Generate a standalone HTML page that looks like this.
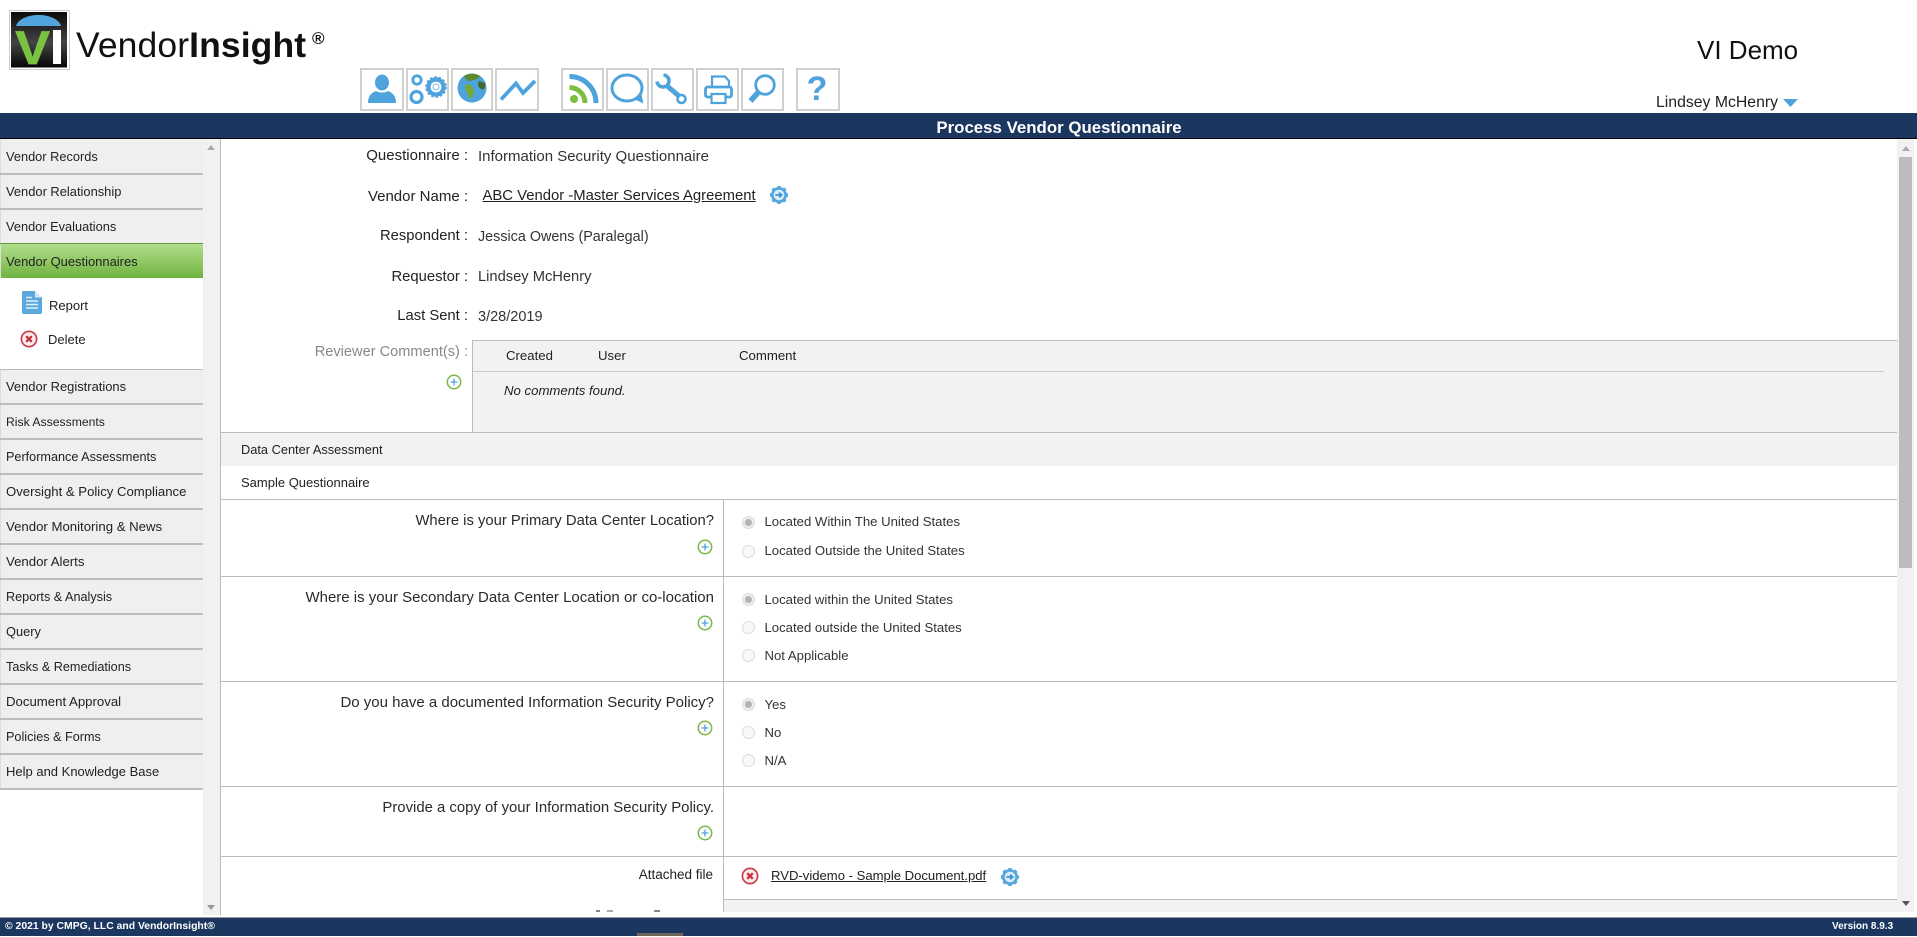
<!DOCTYPE html>
<html><head><meta charset="utf-8"><title>Process Vendor Questionnaire</title>
<style>
html,body{margin:0;padding:0;width:1917px;height:936px;overflow:hidden;background:#fff;font-family:"Liberation Sans",sans-serif;color:#222}
.a{position:absolute}
.t{position:absolute;white-space:nowrap;line-height:20px;height:20px}
.btn{position:absolute;top:68px;height:39px;border:2px solid #d0d0d0;background:#fff}
.side{position:absolute;left:0;width:203px;height:33px;background:#efefef;border-bottom:2px solid #bdbdbd;font-size:12.8px;line-height:33px;text-indent:6px;color:#222;box-shadow:inset 1px 0 0 #ddd}
.side.d{line-height:35px}
.h{position:absolute;left:221px;width:1676px;height:1px;background:#bbb}
.lab{font-size:14.8px;color:#222;text-align:right}
.val{font-size:15px;color:#333}
.q{font-size:14.8px;color:#2a2a2a;text-align:right;right:1203px}
.o{font-size:13.15px;color:#333;left:764.5px}
.r{position:absolute;left:742px;width:11px;height:11px;border:1px solid #dcdcdc;border-radius:50%;background:#f8f8f8}
.r.c{background:#ececec}
.r.c:after{content:"";position:absolute;left:2px;top:2px;width:7px;height:7px;border-radius:50%;background:#b4b4b4}
svg.i{position:absolute;overflow:visible}
</style></head><body>
<svg width="0" height="0" style="position:absolute">
<defs>
<symbol id="plus" viewBox="0 0 16 16"><circle cx="8" cy="8" r="6.7" fill="#fff" stroke="#7ab648" stroke-width="1.5"/><path d="M8 4.6V11.4M4.6 8H11.4" stroke="#4e9fd8" stroke-width="1.3"/></symbol>
<symbol id="x" viewBox="0 0 18 18"><circle cx="9" cy="9" r="7.6" fill="#fbeeee" stroke="#c9404e" stroke-width="1.7"/><path d="M6.2 6.2L11.8 11.8M11.8 6.2L6.2 11.8" stroke="#c9303f" stroke-width="2.4"/></symbol>
<symbol id="gear" viewBox="0 0 20 20"><g fill="#55a7de"><circle cx="10" cy="10" r="8"/><g stroke="#55a7de" stroke-width="3.4"><path d="M10 1V19M1 10H19M3.6 3.6L16.4 16.4M16.4 3.6L3.6 16.4"/></g></g><circle cx="10" cy="10" r="5.3" fill="#dcedf9"/><path d="M6.3 10H12M10 7.6L12.8 10L10 12.4" fill="none" stroke="#3f95d2" stroke-width="1.7"/></symbol>
</defs></svg>

<!-- logo -->
<svg class="i" style="left:9px;top:10px" width="62" height="60" viewBox="9 10 62 60">
<defs><linearGradient id="lg" x1="0" x2="0" y1="0" y2="1"><stop offset="0" stop-color="#0a0a0a"/><stop offset=".55" stop-color="#444"/><stop offset="1" stop-color="#060606"/></linearGradient></defs>
<rect x="9.5" y="10.5" width="60" height="59" fill="#fff" stroke="#ccc"/>
<rect x="11" y="12" width="56" height="55.5" fill="url(#lg)"/>
<path d="M16 26C18 19 28 15 38.500 15C49 15 59 19 61 26Z" fill="#52a5dc"/>
<text x="15.500" y="64" font-family="Liberation Sans" font-weight="700" font-size="47" fill="#7cc242" stroke="#7cc242" stroke-width=".8" transform="translate(-1.700 0) scale(1.1 1)">V</text>
<rect x="53" y="30" width="8" height="34" fill="#fff"/>
</svg>
<div class="t" style="left:76px;top:23px;height:44px;line-height:44px;font-size:35.500px;color:#111;letter-spacing:.1px">Vendor<b>Insight</b></div>
<div class="t" style="left:312px;top:29px;font-size:17px;color:#111;font-weight:700">®</div>

<!-- toolbar -->
<div class="btn" style="left:360px;width:40px"></div>
<div class="btn" style="left:406px;width:39px"></div>
<div class="btn" style="left:451px;width:38px"></div>
<div class="btn" style="left:495px;width:40px"></div>
<div class="btn" style="left:561px;width:39px"></div>
<div class="btn" style="left:606px;width:39px"></div>
<div class="btn" style="left:651px;width:39px"></div>
<div class="btn" style="left:696px;width:39px"></div>
<div class="btn" style="left:741px;width:39px"></div>
<div class="btn" style="left:796px;width:40px"></div>
<svg class="i" style="left:0;top:0" width="900" height="113" viewBox="0 0 900 113">
<!-- person -->
<ellipse cx="382" cy="82.500" rx="7" ry="8" fill="#4fa3dc"/>
<path d="M368 103C368 96 371 93 376 91C379 93 385 93 388 91C393 93 396 96 396 103Z" fill="#4fa3dc"/>
<!-- gears -->
<circle cx="417" cy="80" r="4.200" fill="none" stroke="#4fa3dc" stroke-width="2.800"/>
<circle cx="416.500" cy="97" r="5.500" fill="none" stroke="#4fa3dc" stroke-width="3.200"/>
<circle cx="436" cy="87" r="7.500" fill="none" stroke="#4fa3dc" stroke-width="4.200"/>
<circle cx="436" cy="87" r="10" fill="none" stroke="#4fa3dc" stroke-width="1.600" stroke-dasharray="2.600 1.900"/>
<circle cx="436" cy="87" r="3" fill="none" stroke="#7dbce7" stroke-width="1"/>
<!-- globe -->
<circle cx="472" cy="88" r="14.500" fill="#4fa3dc"/>
<path d="M464 76C468 73 476 73 480 76C478 80 474 79 471 81C468 82 466 80 464 76Z" fill="#5d8a2f"/>
<path d="M479 81L485 83C486 87 484 91 481 89C478 87 477 84 479 81Z" fill="#46682a"/>
<path d="M465 85C468 83 473 86 474 90C475 93 473 94 472 98L469 98C469 94 464 90 465 85Z" fill="#76a838"/>
<!-- trend -->
<path d="M501 99.500L516 83.500L523 93L535 81" fill="none" stroke="#4fa3dc" stroke-width="3.800"/>
<!-- rss -->
<circle cx="574" cy="99" r="4" fill="#7fbd3f"/>
<path d="M569.500 87.500A15.500 15.500 0 0 1 585 103" fill="none" stroke="#7fbd3f" stroke-width="5"/>
<path d="M569.500 76.500A26.500 26.500 0 0 1 596 103" fill="none" stroke="#4fa3dc" stroke-width="5"/>
<!-- chat -->
<ellipse cx="627" cy="88" rx="15" ry="13" fill="none" stroke="#4fa3dc" stroke-width="3"/>
<path d="M634 99L643.500 103.500L641 92Z" fill="#4fa3dc"/>
<!-- wrench -->
<path d="M663.500 75A6 6 0 1 1 657 81.500" fill="none" stroke="#4fa3dc" stroke-width="3.600"/>
<path d="M666 85L679 96" stroke="#4fa3dc" stroke-width="5"/>
<circle cx="681.500" cy="99" r="4" fill="#fff" stroke="#4fa3dc" stroke-width="2.600"/>
<!-- printer -->
<path d="M712 88V76.500H725L729 81V88" fill="none" stroke="#4fa3dc" stroke-width="2.200"/>
<rect x="705.500" y="87" width="26" height="10" rx="2" fill="none" stroke="#4fa3dc" stroke-width="2.800"/>
<rect x="711.500" y="94" width="14" height="9" fill="#fff" stroke="#4fa3dc" stroke-width="2.200"/>
<!-- magnifier -->
<circle cx="765" cy="85" r="9.300" fill="none" stroke="#4fa3dc" stroke-width="2.800"/>
<path d="M758.500 92L750.500 101" stroke="#4fa3dc" stroke-width="5.500"/>
<!-- arrow -->
<path d="M1783 99H1798L1790.500 107Z" fill="#4fa3dc"/>
</svg>
<div class="t" style="left:805px;top:70px;height:38px;line-height:38px;width:24px;text-align:center;font-size:34px;font-weight:700;color:#4fa3dc">?</div>

<div class="t" style="left:1697px;top:34px;height:32px;line-height:32px;font-size:26px;color:#111">VI Demo</div>
<div class="t" style="left:1656px;top:93px;font-size:15.800px;color:#222">Lindsey McHenry</div>

<!-- title bar -->
<div class="a" style="left:0;top:113px;width:1917px;height:25px;background:#1b365f;border-bottom:1px solid #000"></div>
<div class="t" style="left:0;width:2118px;text-align:center;top:118px;font-size:16.850px;font-weight:700;color:#fff">Process Vendor Questionnaire</div>

<!-- sidebar -->
<div class="a" style="left:203px;top:139px;width:17px;height:776px;background:#f1f1f1"></div>
<div class="a" style="left:220px;top:139px;width:1px;height:776px;background:#bbb"></div>
<div class="a" style="left:207px;top:145px;width:0;height:0;border:4px solid transparent;border-top:0;border-bottom:5px solid #aaa"></div>
<div class="a" style="left:207px;top:905px;width:0;height:0;border:4px solid transparent;border-bottom:0;border-top:5px solid #999"></div>

<div class="side" style="top:139px;height:34px;line-height:35px">Vendor Records</div>
<div class="side" style="top:175px;font-size:12.900px">Vendor Relationship</div>
<div class="side" style="top:210px">Vendor Evaluations</div>
<div class="side" style="top:243px;height:34px;line-height:36px;border-top:1px solid #5f9c3a;border-bottom:0;background:linear-gradient(#b2de8c,#6fb440);font-size:12.950px">Vendor Questionnaires</div>
<svg class="i" style="left:21px;top:290px" width="22" height="25" viewBox="0 0 22 25"><path d="M1 2.500Q1 1 2.500 1H14L21 7.500V22.500Q21 24 19.500 24H2.500Q1 24 1 22.500Z" fill="#5aa8dc"/><path d="M14 1V7.500H21" fill="#d4e8f6"/><path d="M5 7.500H11M5 11H17M5 14.500H17M5 18H17" stroke="#e2f0fa" stroke-width="1.500"/></svg>
<div class="t" style="left:49px;top:296px;font-size:13px;color:#222">Report</div>
<svg class="i" style="left:20px;top:330px" width="18" height="18"><use href="#x"/></svg>
<div class="t" style="left:48px;top:330px;font-size:13px;color:#222">Delete</div>
<div class="a" style="left:0;top:369px;width:203px;height:1px;background:#bbb"></div>

<div class="side" style="top:370px;font-size:12.950px">Vendor Registrations</div>
<div class="side d" style="top:405px;font-size:12.200px">Risk Assessments</div>
<div class="side d" style="top:440px;font-size:12.650px">Performance Assessments</div>
<div class="side" style="top:475px;font-size:13.150px">Oversight &amp; Policy Compliance</div>
<div class="side" style="top:510px;font-size:13.200px">Vendor Monitoring &amp; News</div>
<div class="side" style="top:545px;font-size:13.200px">Vendor Alerts</div>
<div class="side d" style="top:580px;font-size:12.650px">Reports &amp; Analysis</div>
<div class="side" style="top:615px">Query</div>
<div class="side d" style="top:650px;font-size:12.650px">Tasks &amp; Remediations</div>
<div class="side" style="top:685px;font-size:13.200px">Document Approval</div>
<div class="side d" style="top:720px;font-size:12.650px">Policies &amp; Forms</div>
<div class="side" style="top:755px;font-size:13px">Help and Knowledge Base</div>

<!-- header form -->
<div class="t lab" style="right:1449px;top:146px;font-size:15px">Questionnaire :</div>
<div class="t val" style="left:478px;top:147px">Information Security Questionnaire</div>
<div class="t lab" style="right:1449px;top:187px;font-size:15px">Vendor Name :</div>
<div class="t" style="left:482.500px;top:186px;font-size:14.850px;color:#222;text-decoration:underline">ABC Vendor -Master Services Agreement</div>
<svg class="i" style="left:769px;top:185px" width="20" height="20"><use href="#gear"/></svg>
<div class="t lab" style="right:1449px;top:226px">Respondent :</div>
<div class="t val" style="left:478px;top:227px;font-size:14.350px">Jessica Owens (Paralegal)</div>
<div class="t lab" style="right:1449px;top:267px">Requestor :</div>
<div class="t val" style="left:478px;top:267px;font-size:14.700px">Lindsey McHenry</div>
<div class="t lab" style="right:1449px;top:306px">Last Sent :</div>
<div class="t val" style="left:478px;top:307px;font-size:14.500px">3/28/2019</div>
<div class="t lab" style="right:1449px;top:342px;color:#888;font-size:14.600px">Reviewer Comment(s) :</div>
<svg class="i" style="left:446px;top:374px" width="16" height="16"><use href="#plus"/></svg>

<!-- comments box -->
<div class="a" style="left:472px;top:340px;width:1424px;height:92px;background:#f2f2f2;border-top:1px solid #bbb;border-left:1px solid #bbb"></div>
<div class="t" style="left:506px;top:346px;font-size:13.200px;color:#222">Created</div>
<div class="t" style="left:598px;top:346px;font-size:13.200px;color:#222">User</div>
<div class="t" style="left:739px;top:346px;font-size:13.200px;color:#222">Comment</div>
<div class="a" style="left:473px;top:371px;width:1411px;height:1px;background:#ccc"></div>
<div class="t" style="left:504px;top:381px;font-size:13.200px;font-style:italic;color:#222">No comments found.</div>

<!-- sections -->
<div class="a" style="left:221px;top:433px;width:1676px;height:33px;background:#f2f2f2"></div>
<div class="h" style="top:432px"></div>
<div class="t" style="left:241px;top:440px;font-size:12.800px;color:#222">Data Center Assessment</div>
<div class="t" style="left:241px;top:473px;font-size:13px;color:#222">Sample Questionnaire</div>
<div class="h" style="top:499px"></div>
<div class="a" style="left:723px;top:500px;width:1px;height:412px;background:#bbb"></div>

<div class="t q" style="top:511px">Where is your Primary Data Center Location?</div>
<svg class="i" style="left:697px;top:539px" width="16" height="16"><use href="#plus"/></svg>
<div class="r c" style="top:516px"></div><div class="t o" style="top:512px">Located Within The United States</div>
<div class="r" style="top:545px"></div><div class="t o" style="top:541px">Located Outside the United States</div>
<div class="h" style="top:576px"></div>

<div class="t q" style="top:588px;font-size:15px">Where is your Secondary Data Center Location or co-location</div>
<svg class="i" style="left:697px;top:615px" width="16" height="16"><use href="#plus"/></svg>
<div class="r c" style="top:593px"></div><div class="t o" style="top:590px">Located within the United States</div>
<div class="r" style="top:621px"></div><div class="t o" style="top:618px">Located outside the United States</div>
<div class="r" style="top:649px"></div><div class="t o" style="top:646px">Not Applicable</div>
<div class="h" style="top:681px"></div>

<div class="t q" style="top:693px;font-size:15px">Do you have a documented Information Security Policy?</div>
<svg class="i" style="left:697px;top:720px" width="16" height="16"><use href="#plus"/></svg>
<div class="r c" style="top:698px"></div><div class="t o" style="top:695px">Yes</div>
<div class="r" style="top:726px"></div><div class="t o" style="top:723px">No</div>
<div class="r" style="top:754px"></div><div class="t o" style="top:751px">N/A</div>
<div class="h" style="top:786px"></div>

<div class="t q" style="top:798px;font-size:14.900px">Provide a copy of your Information Security Policy.</div>
<svg class="i" style="left:697px;top:825px" width="16" height="16"><use href="#plus"/></svg>
<div class="h" style="top:856px"></div>

<div class="t" style="right:1204px;top:865px;font-size:13.500px;color:#222">Attached file</div>
<svg class="i" style="left:741px;top:867px" width="18" height="18"><use href="#x"/></svg>
<div class="t" style="left:771px;top:866px;font-size:13.100px;color:#222;text-decoration:underline">RVD-videmo - Sample Document.pdf</div>
<svg class="i" style="left:1000px;top:867px" width="20" height="20"><use href="#gear"/></svg>
<div class="a" style="left:724px;top:899px;width:1173px;height:13px;background:#f2f2f2;border-top:1px solid #bbb;box-sizing:border-box"></div>
<div class="a" style="left:596px;top:910px;width:4px;height:2px;background:#888"></div>
<div class="a" style="left:607px;top:910px;width:6px;height:2px;background:#aaa"></div>
<div class="a" style="left:654px;top:910px;width:6px;height:2px;background:#888"></div>

<!-- right scrollbar -->
<div class="a" style="left:1897px;top:139px;width:17px;height:773px;background:#f1f1f1"></div>
<div class="a" style="left:1899px;top:157px;width:13px;height:411px;background:#bcbcbc"></div>
<div class="a" style="left:1902px;top:146px;width:0;height:0;border:4px solid transparent;border-top:0;border-bottom:5px solid #aaa"></div>
<div class="a" style="left:1902px;top:901px;width:0;height:0;border:4px solid transparent;border-bottom:0;border-top:5px solid #555"></div>

<!-- footer -->
<div class="a" style="left:0;top:917px;width:1917px;height:19px;background:#1b365f;border-top:1px solid #999;box-sizing:border-box"></div>
<div class="a" style="left:637px;top:933px;width:46px;height:3px;background:#6e6255"></div>
<div class="t" style="left:5px;top:917px;font-size:10.400px;font-weight:700;color:#fff">© 2021 by CMPG, LLC and VendorInsight®</div>
<div class="t" style="left:1832px;top:917px;font-size:10px;font-weight:700;color:#fff">Version 8.9.3</div>
</body></html>
